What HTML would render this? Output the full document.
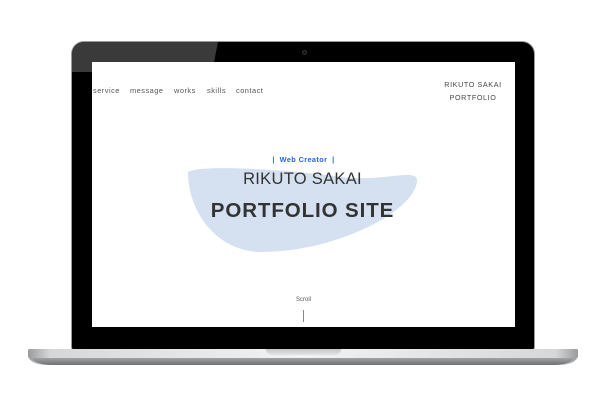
<!DOCTYPE html>
<html><head><meta charset="utf-8"><style>
*{margin:0;padding:0;box-sizing:border-box}
body{width:612px;height:408px;background:#fff;position:relative;overflow:hidden;font-family:"Liberation Sans",Arial,sans-serif}
.abs{position:absolute}
.lid{left:72px;top:42px;width:462px;height:309px;background:#000;border-radius:12px 12px 4px 4px;box-shadow:0 0 0 1px #9a9a9a;overflow:hidden}
.glare{left:0;top:0;width:146px;height:30px;background:#3a3a3a;clip-path:polygon(0 0,100% 0,96% 100%,0 100%)}
.screen{left:92px;top:62px;width:423px;height:265px;background:#fff;overflow:hidden}
.base{left:28px;top:349px;width:550px;height:16px;border-radius:2px 2px 18px 18px/2px 2px 10px 10px;background:linear-gradient(90deg,#9a9b9d 0%,#d6d7d9 4%,#e6e7e9 30%,#f1f2f2 50%,#e6e7e9 70%,#d6d7d9 96%,#9a9b9d 100%)}
.baseb{left:32px;top:357px;width:542px;height:8px;border-radius:0 0 20px 20px/0 0 8px 8px;background:linear-gradient(#a9aaac,#6f7072)}
.notch{left:266px;top:349px;width:75px;height:6px;border-radius:0 0 6px 6px;background:linear-gradient(#c3c4c6,#e3e4e6)}
.nav{top:24px;font-size:7.4px;color:#555;letter-spacing:.5px}
.t{font-size:7.2px;color:#444;letter-spacing:.6px;text-align:center}
</style></head><body>
<div class="abs lid"><div class="abs glare"></div>
<div class="abs" style="left:230px;top:8px;width:5px;height:5px;border-radius:50%;background:#111;border:1px solid #333"></div></div>
<div class="abs screen">
<svg class="abs" style="left:0;top:0" width="423" height="265"><path d="M96,110 C110,102 200,108 250,115 C290,120 325,106 325,118 C325,148 245,190 170,190 C125,190 96,150 96,110 Z" fill="#d5e0f1"/></svg>
<div class="abs nav" style="left:1px">service</div>
<div class="abs nav" style="left:38px">message</div>
<div class="abs nav" style="left:82px">works</div>
<div class="abs nav" style="left:115px">skills</div>
<div class="abs nav" style="left:144px">contact</div>
<div class="abs t" style="left:345px;top:18px;width:72px">RIKUTO SAKAI</div>
<div class="abs t" style="left:345px;top:31px;width:72px">PORTFOLIO</div>
<div class="abs" style="left:0;width:423px;top:93px;text-align:center;font-size:7.3px;font-weight:bold;color:#2266dd;letter-spacing:.4px">|&nbsp; Web Creator &nbsp;|</div>
<div class="abs" style="left:-1px;width:423px;top:108px;text-align:center;font-size:16.5px;color:#333;letter-spacing:.3px">RIKUTO SAKAI</div>
<div class="abs" style="left:-1px;width:423px;top:137px;text-align:center;font-size:20.5px;font-weight:bold;color:#333;letter-spacing:.9px">PORTFOLIO SITE</div>
<div class="abs" style="left:0;width:423px;top:235px;text-align:center;font-size:6px;color:#555">Scroll</div>
<div class="abs" style="left:211px;top:248px;width:1px;height:12px;background:#888"></div>
</div>
<div class="abs base"></div>
<div class="abs baseb"></div>
<div class="abs base" style="height:9px;border-radius:2px"></div>
<div class="abs notch"></div>
</body></html>
